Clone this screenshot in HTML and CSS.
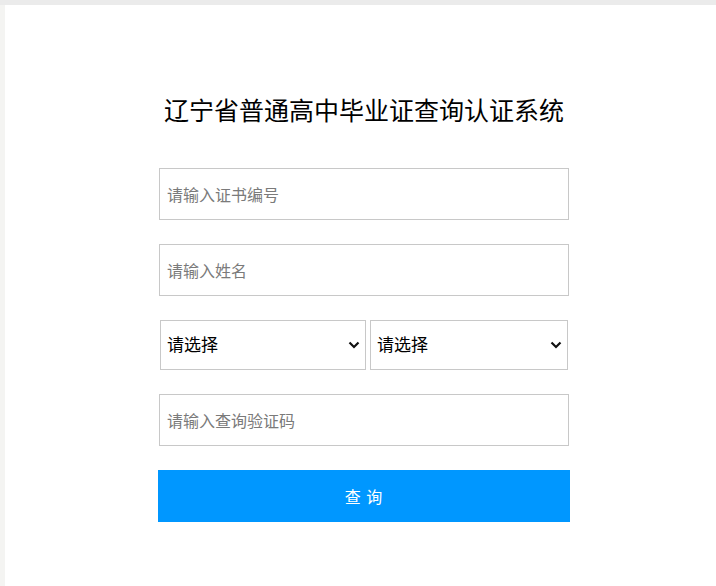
FILE: index.html
```html
<!DOCTYPE html>
<html>
<head>
    <meta charset="utf-8">
    <title>辽宁省普通高中毕业证查询认证系统</title>
    <link rel="stylesheet" href="styles.css">
</head>
<body>
    <div class="topbar"></div>
    <div class="page">
        <div class="container">
            <h1>辽宁省普通高中毕业证查询认证系统</h1>

            <div class="field">
                <input type="text" id="cert_no" placeholder="请输入证书编号">
            </div>
            <div class="field">
                <input type="text" id="name" placeholder="请输入姓名">
            </div>
            <div class="field select-row">
                <div class="select-wrap first">
                    <select id="city">
                        <option>请选择</option>
                    </select>
                    <svg class="chevron" width="12" height="8" viewBox="0 0 12 8"><polyline points="1.5,1.5 6,6 10.5,1.5" fill="none" stroke="#111" stroke-width="2.2"/></svg>
                </div>
                <div class="select-wrap second">
                    <select id="year">
                        <option>请选择</option>
                    </select>
                    <svg class="chevron" width="12" height="8" viewBox="0 0 12 8"><polyline points="1.5,1.5 6,6 10.5,1.5" fill="none" stroke="#111" stroke-width="2.2"/></svg>
                </div>
            </div>
            <div class="field">
                <input type="text" id="code" placeholder="请输入查询验证码">
            </div>

            <button type="button" class="btn">查 询</button>
        </div>
    </div>
</body>
</html>
```

FILE: styles.css
```css
html, body {
    height: 100%;
}
body {
    margin: 0;
    background: #f4f4f2;
    font-family: "Noto Sans CJK SC", "Noto Sans", sans-serif;
    display: flex;
    flex-direction: column;
}
.topbar {
    height: 5px;
    background: #ebebeb;
}
.page {
    flex: 1;
    margin-left: 5px;
    background: #fff;
    padding-top: 87px;
}
.container {
    width: 412px;
    margin-left: 153px;
}
h1 {
    margin: 0 0 41px;
    font-size: 25px;
    line-height: 35px;
    font-weight: normal;
    color: #000;
    text-align: center;
}
.field {
    margin-bottom: 24px;
}
.field input {
    display: block;
    width: 410px;
    height: 52px;
    margin: 0 1px;
    padding: 0 7px;
    box-sizing: border-box;
    border: 1px solid #c8c8c8;
    font-family: inherit;
    font-size: 16px;
    color: #333;
    outline: none;
}
.field input::placeholder {
    color: #7a7a7a;
}
.select-row {
    display: flex;
    gap: 4px;
    padding-left: 2px;
}
.select-wrap {
    position: relative;
}
.select-wrap.first {
    width: 206px;
}
.select-wrap.second {
    width: 198px;
}
.select-wrap select {
    display: block;
    width: 100%;
    height: 50px;
    padding: 0 6px 3px;
    box-sizing: border-box;
    border: 1px solid #c8c8c8;
    border-radius: 0;
    background: #fff;
    font-family: inherit;
    font-size: 17px;
    color: #000;
    appearance: none;
    -webkit-appearance: none;
    outline: none;
}
.chevron {
    position: absolute;
    top: 21px;
    right: 6px;
    pointer-events: none;
}
.btn {
    display: block;
    width: 412px;
    height: 52px;
    border: none;
    background: #0097ff;
    color: #fff;
    font-family: inherit;
    font-size: 16px;
    letter-spacing: 1px;
    cursor: pointer;
}
```
